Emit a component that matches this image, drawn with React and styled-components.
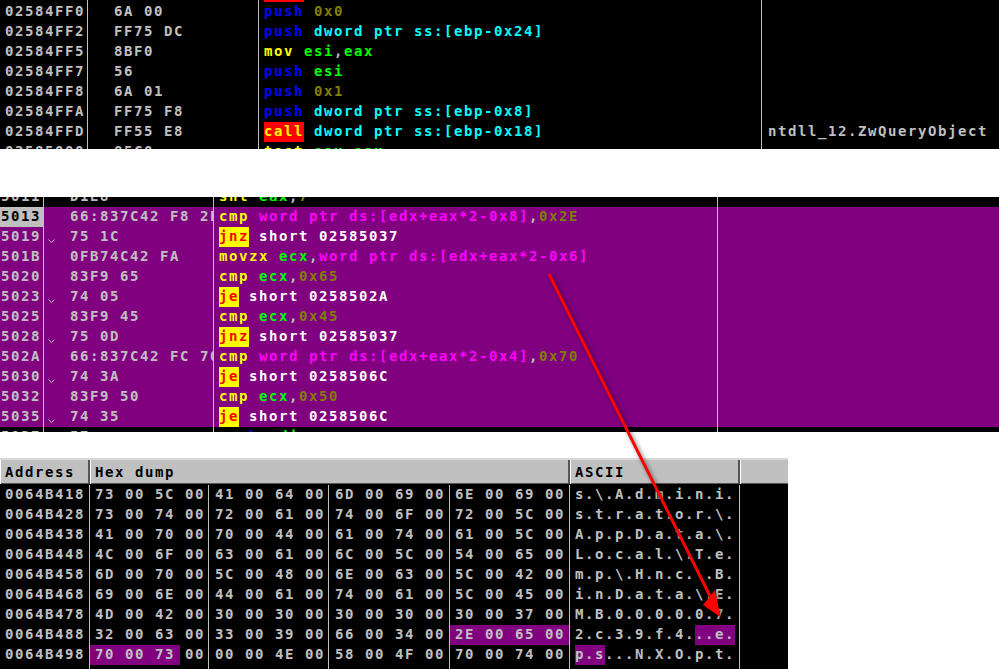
import React from 'react'
import styled, { createGlobalStyle } from 'styled-components'

const GlobalStyle = createGlobalStyle`
  html, body {
    margin: 0;
    background: #fff;
  }
  body {
    font-family: "DejaVu Sans Mono", "Liberation Mono", monospace;
    font-size: 14px;
    font-weight: 700;
    letter-spacing: 1.57px;
    line-height: 18px;
    white-space: pre;
  }
`

const Page = styled.div`
  position: relative;
  width: 999px;
  height: 669px;
  overflow: hidden;
  display: flex;
  flex-direction: column;
`

const Panel = styled.section`
  height: ${p => p.$height}px;
  width: ${p => p.$width || 999}px;
  margin-bottom: ${p => p.$gap || 0}px;
  background: #000;
  overflow: hidden;
  flex: none;
`

const Rows = styled.div`
  margin-top: ${p => p.$shift || 0}px;
`

const Row = styled.div`
  display: grid;
  grid-template-columns: ${p => p.$cols};
  height: ${p => p.$h || 20}px;
  background: ${p => (p.$selected ? '#800080' : 'transparent')};
  color: #c0c0c0;
`

const Cell = styled.div`
  display: flex;
  height: 100%;
  overflow: hidden;
  box-sizing: border-box;
  border-right: 1px solid ${p => (p.$last ? 'transparent' : '#c0c0c0')};
  padding-left: ${p => p.$pad || 0}px;
  background: ${p => p.$bg || 'transparent'};
  color: ${p => p.$fg || 'inherit'};
`

const JumpMark = styled.span`
  flex: none;
  width: 26px;
  height: 20px;
  svg {
    display: block;
    margin: 12px 0 0 4px;
  }
`

const Tok = styled.span`
  flex: none;
  color: ${p => p.$c};
  background: ${p => p.$bg || 'transparent'};
`

const Mark = styled.span`
  flex: none;
  background: #800080;
  padding: ${p => p.$pad || '0'};
`

const Plain = styled.span`
  flex: none;
  padding-left: ${p => p.$pad || 0}px;
`

const HeaderRow = styled.div`
  display: grid;
  grid-template-columns: 90px 480px 170px 48px;
  height: 26px;
  box-sizing: border-box;
  background: #c0c0c0;
  border-top: 2px solid #d8d8d8;
  border-bottom: 1px solid #555;
  color: #000;
  line-height: 24px;
`

const HeaderCell = styled.div`
  padding-left: 5px;
  box-sizing: border-box;
  border-right: 2px solid #555;
  box-shadow: inset 1px 0 0 #fff;
  &:last-child {
    border-right: 0;
  }
`

const ArrowLayer = styled.svg`
  position: absolute;
  left: 0;
  top: 0;
  pointer-events: none;
  filter: drop-shadow(2px 2px 2px rgba(0, 0, 0, 0.5));
`

const C = {
  white: '#ffffff',
  blue: '#0000ff',
  cyan: '#00ffff',
  olive: '#808000',
  yellow: '#ffff00',
  green: '#00ff00',
  magenta: '#ff00ff',
  silver: '#c0c0c0',
  red: '#ff0000',
}

const t = (text, c, bg) => ({ text, c, bg })
const jump = m => t(m, C.red, C.yellow)
const cmpReg = (reg, val) => [t('cmp ', C.yellow), t(reg, C.green), t(',', C.silver), t(val, C.olive)]
const jcc = (m, addr) => [jump(m), t(' short ' + addr, C.white)]

const TOP_COLS = '88px 171px 503px 237px'
const MID_COLS = '44px 170px 504px 281px'

const topRows = [
  { addr: '02584FEE', hex: 'FF55 EC', code: [t('call', C.yellow, C.red)] },
  { addr: '02584FF0', hex: '6A 00', code: [t('push ', C.blue), t('0x0', C.olive)] },
  { addr: '02584FF2', hex: 'FF75 DC', code: [t('push ', C.blue), t('dword ptr ss:[ebp-0x24]', C.cyan)] },
  { addr: '02584FF5', hex: '8BF0', code: [t('mov ', C.yellow), t('esi', C.green), t(',', C.silver), t('eax', C.green)] },
  { addr: '02584FF7', hex: '56', code: [t('push ', C.blue), t('esi', C.green)] },
  { addr: '02584FF8', hex: '6A 01', code: [t('push ', C.blue), t('0x1', C.olive)] },
  { addr: '02584FFA', hex: 'FF75 F8', code: [t('push ', C.blue), t('dword ptr ss:[ebp-0x8]', C.cyan)] },
  {
    addr: '02584FFD',
    hex: 'FF55 E8',
    code: [t('call', C.yellow, C.red), t(' '), t('dword ptr ss:[ebp-0x18]', C.cyan)],
    note: 'ntdll_12.ZwQueryObject',
  },
  { addr: '02585000', hex: '85C0', code: [t('test ', C.yellow), t('eax', C.green), t(',', C.silver), t('eax', C.green)] },
]

const midRows = [
  { addr: '5011', hex: 'D1E8', code: [t('shl ', C.yellow), t('eax', C.green), t(',', C.silver), t('7', C.olive)], plain: true },
  {
    addr: '5013',
    hex: '66:837C42 F8 2E',
    active: true,
    code: [t('cmp ', C.yellow), t('word ptr ds:[edx+eax*2-0x8]', C.magenta), t(',', C.silver), t('0x2E', C.olive)],
  },
  { addr: '5019', hex: '75 1C', jumps: true, code: jcc('jnz', '02585037') },
  {
    addr: '501B',
    hex: '0FB74C42 FA',
    code: [t('movzx ', C.yellow), t('ecx', C.green), t(',', C.silver), t('word ptr ds:[edx+eax*2-0x6]', C.magenta)],
  },
  { addr: '5020', hex: '83F9 65', code: cmpReg('ecx', '0x65') },
  { addr: '5023', hex: '74 05', jumps: true, code: jcc('je', '0258502A') },
  { addr: '5025', hex: '83F9 45', code: cmpReg('ecx', '0x45') },
  { addr: '5028', hex: '75 0D', jumps: true, code: jcc('jnz', '02585037') },
  {
    addr: '502A',
    hex: '66:837C42 FC 70',
    code: [t('cmp ', C.yellow), t('word ptr ds:[edx+eax*2-0x4]', C.magenta), t(',', C.silver), t('0x70', C.olive)],
  },
  { addr: '5030', hex: '74 3A', jumps: true, code: jcc('je', '0258506C') },
  { addr: '5032', hex: '83F9 50', code: cmpReg('ecx', '0x50') },
  { addr: '5035', hex: '74 35', jumps: true, code: jcc('je', '0258506C') },
  { addr: '5037', hex: '57', code: [t('push ', C.blue), t('edi', C.green)], plain: true },
]

const dumpRows = [
  ['0064B418', '73 00 5C 00', '41 00 64 00', '6D 00 69 00', '6E 00 69 00', 's.\\.A.d.m.i.n.i.'],
  ['0064B428', '73 00 74 00', '72 00 61 00', '74 00 6F 00', '72 00 5C 00', 's.t.r.a.t.o.r.\\.'],
  ['0064B438', '41 00 70 00', '70 00 44 00', '61 00 74 00', '61 00 5C 00', 'A.p.p.D.a.t.a.\\.'],
  ['0064B448', '4C 00 6F 00', '63 00 61 00', '6C 00 5C 00', '54 00 65 00', 'L.o.c.a.l.\\.T.e.'],
  ['0064B458', '6D 00 70 00', '5C 00 48 00', '6E 00 63 00', '5C 00 42 00', 'm.p.\\.H.n.c.\\.B.'],
  ['0064B468', '69 00 6E 00', '44 00 61 00', '74 00 61 00', '5C 00 45 00', 'i.n.D.a.t.a.\\.E.'],
  ['0064B478', '4D 00 42 00', '30 00 30 00', '30 00 30 00', '30 00 37 00', 'M.B.0.0.0.0.0.7.'],
]

const DUMP_COLS = '90px 119px 120px 121px 120px 170px 48px'

const Chevron = () => (
  <svg width="7" height="5" viewBox="0 0 7 5">
    <path d="M0.5 0.5 L3.5 3.5 L6.5 0.5" fill="none" stroke="#c0c0c0" strokeWidth="1" />
  </svg>
)

const Code = ({ tokens }) =>
  tokens.map((tok, i) => (
    <Tok key={i} $c={tok.c} $bg={tok.bg}>
      {tok.text}
    </Tok>
  ))

function DisasmRow({ row, cols, addrPad, codePad }) {
  return (
    <Row $cols={cols} $selected={cols === MID_COLS && !row.plain}>
      <Cell $pad={addrPad} $bg={row.active ? '#c0c0c0' : undefined} $fg={row.active ? '#000' : undefined}>
        {row.addr}
      </Cell>
      <Cell>
        <JumpMark>{row.jumps ? <Chevron /> : null}</JumpMark>
        {row.hex}
      </Cell>
      <Cell $pad={codePad}>
        <Code tokens={row.code} />
      </Cell>
      <Cell $last $pad={6}>
        {row.note}
      </Cell>
    </Row>
  )
}

function DumpRow({ row }) {
  return (
    <Row $cols={DUMP_COLS}>
      <Cell $pad={5}>{row[0]}</Cell>
      <Cell $pad={5}>{row[1]}</Cell>
      <Cell $pad={6}>{row[2]}</Cell>
      <Cell $pad={6}>{row[3]}</Cell>
      <Cell $pad={5}>{row[4]}</Cell>
      <Cell $pad={5}>{row[5]}</Cell>
      <Cell $last />
    </Row>
  )
}

export default function App() {
  return (
    <Page>
      <GlobalStyle />

      <Panel $height={149} $gap={48}>
        <Rows $shift={-18}>
          {topRows.map(row => (
            <DisasmRow key={row.addr} row={row} cols={TOP_COLS} addrPad={5} codePad={5} />
          ))}
        </Rows>
      </Panel>

      <Panel $height={235} $gap={26}>
        <Rows $shift={-10}>
          {midRows.map(row => (
            <DisasmRow key={row.addr} row={row} cols={MID_COLS} addrPad={1} codePad={5} />
          ))}
        </Rows>
      </Panel>

      <Panel $height={211} $width={788}>
        <HeaderRow>
          <HeaderCell>Address</HeaderCell>
          <HeaderCell>Hex dump</HeaderCell>
          <HeaderCell>ASCII</HeaderCell>
          <HeaderCell />
        </HeaderRow>
        <Rows $shift={1}>
          {dumpRows.map(row => (
            <DumpRow key={row[0]} row={row} />
          ))}
          <Row $cols={DUMP_COLS}>
            <Cell $pad={5}>0064B488</Cell>
            <Cell $pad={5}>32 00 63 00</Cell>
            <Cell $pad={6}>33 00 39 00</Cell>
            <Cell $pad={6}>66 00 34 00</Cell>
            <Cell $pad={5} $bg="#800080">2E 00 65 00</Cell>
            <Cell $pad={5}>
              <Plain>2.c.3.9.f.4.</Plain>
              <Mark>..e.</Mark>
            </Cell>
            <Cell $last />
          </Row>
          <Row $cols={DUMP_COLS}>
            <Cell $pad={5}>0064B498</Cell>
            <Cell>
              <Mark $pad="0 5px">70 00 73</Mark>
              <Plain $pad={5}>00</Plain>
            </Cell>
            <Cell $pad={6}>00 00 4E 00</Cell>
            <Cell $pad={6}>58 00 4F 00</Cell>
            <Cell $pad={5}>70 00 74 00</Cell>
            <Cell $pad={5}>
              <Mark>p.s</Mark>
              <Plain>...N.X.O.p.t.</Plain>
            </Cell>
            <Cell $last />
          </Row>
          <Row $cols={DUMP_COLS} $h={4}>
            <Cell />
            <Cell />
            <Cell />
            <Cell />
            <Cell />
            <Cell />
            <Cell $last />
          </Row>
        </Rows>
      </Panel>

      <ArrowLayer width="999" height="669" viewBox="0 0 999 669">
        <line x1="549" y1="274" x2="711" y2="598" stroke="#ff0000" strokeWidth="3" />
        <path d="M720.5 617 L703 605 L715 590 Z" fill="#ff0000" />
      </ArrowLayer>
    </Page>
  )
}
